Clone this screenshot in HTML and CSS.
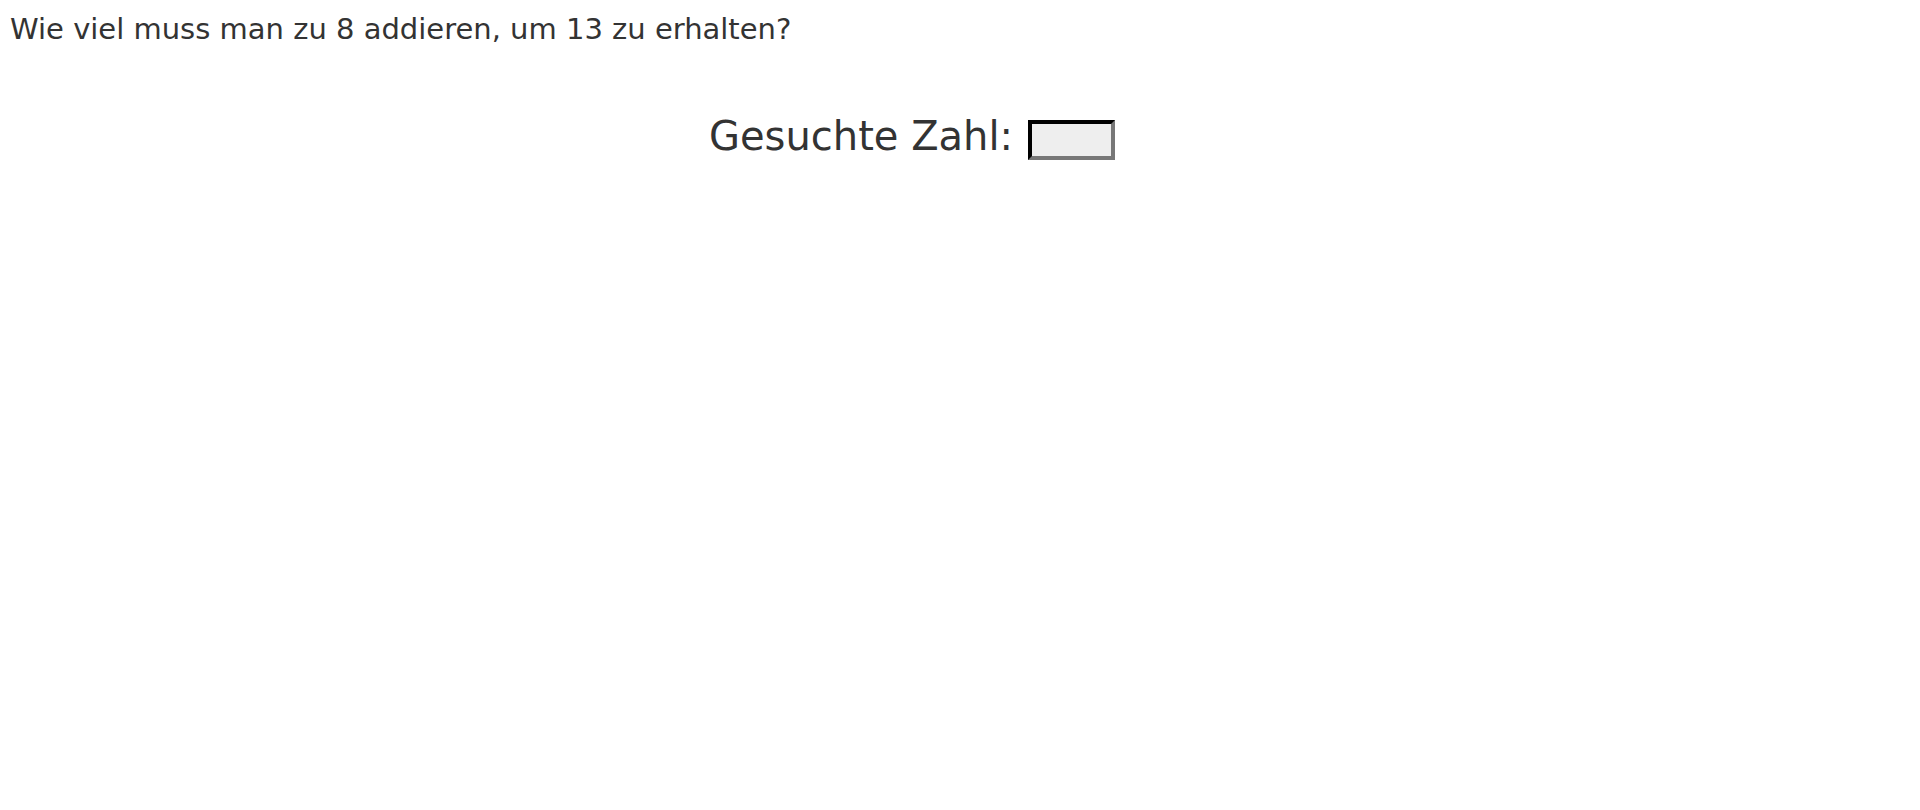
FILE: index.html
```html
<!DOCTYPE html>
<html lang="de">
<head>
<meta charset="utf-8">
<title>Aufgabe</title>
<link rel="stylesheet" href="styles.css">
</head>
<body>
<p class="question">Wie viel muss man zu 8 addieren, um 13 zu erhalten?</p>
<div class="answer">
  <label class="answer-label" for="zahl">Gesuchte Zahl:</label>
  <input class="answer-input" id="zahl" type="text">
</div>
</body>
</html>
```
FILE: styles.css
```css
html, body {
  margin: 0;
  background: #fff;
}
body {
  padding: 10px 10px;
  font-family: "DejaVu Sans", Verdana, sans-serif;
  color: #333;
}
.question {
  margin: 0;
  font-size: 29px;
  line-height: 38px;
}
.answer {
  display: flex;
  justify-content: center;
  align-items: center;
  gap: 15px;
  margin-top: 64px;
  padding-right: 96px;
}
.answer-label {
  font-size: 40px;
  line-height: 48px;
  margin-bottom: 8px;
}
.answer-input {
  box-sizing: border-box;
  width: 87px;
  height: 40px;
  margin: 0;
  padding: 0;
  background: #eee;
  border: 4px inset #777;
  border-top-color: #222;
  border-left-color: #222;
  border-bottom-color: #777;
  border-right-color: #777;
}
```
